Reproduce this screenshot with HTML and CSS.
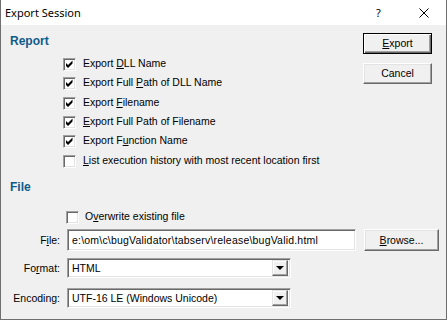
FILE: index.html
```html
<!DOCTYPE html>
<html lang="en">

<head>
    <meta charset="UTF-8">
    <title>Export Session</title>
    <link rel="stylesheet" href="styles.css">
</head>

<body>
    <div class="dialog">
        <div class="titlebar">
            <span class="title">Export Session</span>
            <span class="help">?</span>
            <span class="close">
                <svg width="10" height="10" viewBox="0 0 10 10">
                    <path d="M0.5 0.5 L9.5 9.5 M9.5 0.5 L0.5 9.5" stroke="#000" stroke-width="1" fill="none" />
                </svg>
            </span>
        </div>

        <div class="content">
            <div class="top">
                <div class="report">
                    <h2 class="section first">Report</h2>
                    <div class="checks">
                        <div class="check-row"><span class="box checked"></span><span class="label">Export <u>D</u>LL Name</span></div>
                        <div class="check-row"><span class="box checked"></span><span class="label">Export Full <u>P</u>ath of DLL Name</span></div>
                        <div class="check-row"><span class="box checked"></span><span class="label">Export <u>F</u>ilename</span></div>
                        <div class="check-row"><span class="box checked"></span><span class="label"><u>E</u>xport Full Path of Filename</span></div>
                        <div class="check-row"><span class="box checked"></span><span class="label">Export F<u>u</u>nction Name</span></div>
                        <div class="check-row"><span class="box"></span><span class="label"><u>L</u>ist execution history with most recent location first</span></div>
                    </div>
                </div>
                <div class="actions">
                    <div class="btn default"><u>E</u>xport</div>
                    <div class="btn">Cancel</div>
                </div>
            </div>

            <h2 class="section">File</h2>
            <div class="check-row overwrite"><span class="box"></span><span class="label">O<u>v</u>erwrite existing file</span></div>

            <div class="field file-row">
                <span class="field-label">F<u>i</u>le:</span>
                <div class="sunken text-input">e:\om\c\bugValidator\tabserv\release\bugValid.html</div>
                <div class="btn browse"><u>B</u>rowse...</div>
            </div>
            <div class="field combo-row">
                <span class="field-label">Fo<u>r</u>mat:</span>
                <div class="sunken combo">
                    <span class="combo-text">HTML</span>
                    <span class="arrow"></span>
                </div>
            </div>
            <div class="field combo-row last">
                <span class="field-label">Encoding:</span>
                <div class="sunken combo">
                    <span class="combo-text">UTF-16 LE (Windows Unicode)</span>
                    <span class="arrow"></span>
                </div>
            </div>
        </div>
    </div>
</body>

</html>
```

FILE: styles.css
```css
html,
body {
    margin: 0;
    padding: 0;
    background-color: #ffffff;
}

body {
    font-family: "Liberation Sans", Arial, sans-serif;
    font-size: 10.5px;
    color: #000;
}

.dialog {
    width: 445px;
    height: 319px;
    border: 1px solid #6f6f6f;
    border-top: none;
    background-color: #f0f0f0;
}

/* title bar */
.titlebar {
    height: 25px;
    background-color: #fff;
    display: flex;
    align-items: center;
    padding: 0 17px 0 4px;
    font-family: "Noto Sans", sans-serif;
    font-size: 11px;
    line-height: 25px;
}

.title {
    flex: 1;
}

.help {
    width: 6px;
}

.close {
    margin-left: 37px;
    display: flex;
}

/* body */
.content {
    padding: 8px 0 0 9px;
}

.top {
    display: flex;
}

.report {
    flex: 1;
}

.section {
    margin: 6px 0 0 0;
    font-size: 12px;
    line-height: 14px;
    font-weight: bold;
    color: #0e5a8b;
}

.section.first {
    margin-top: 1px;
}

.checks {
    margin: 10px 0 0 53px;
}

.check-row {
    display: flex;
    align-items: flex-start;
    height: 19.35px;
}

.box {
    width: 11px;
    height: 11px;
    border: 1px solid;
    border-color: #a0a0a0 #fff #fff #a0a0a0;
    box-shadow: inset 1px 1px 0 #696969, inset -1px -1px 0 #e3e3e3;
    background-color: #fff;
    flex-shrink: 0;
}

.box.checked {
    background-image: url("data:image/svg+xml;utf8,<svg xmlns='http://www.w3.org/2000/svg' width='11' height='11' viewBox='0 0 11 11'><path d='M2 4 L4 6 L8.5 1.5 L8.5 4.5 L4 9 L2 7 Z' fill='black'/></svg>");
}

.check-row .label {
    margin-left: 7px;
    line-height: 11px;
    white-space: nowrap;
}

.actions {
    width: 69px;
    margin-right: 14px;
    display: flex;
    flex-direction: column;
    gap: 9px;
}

.btn {
    height: 19px;
    border: 1px solid;
    border-color: #fff #696969 #696969 #fff;
    box-shadow: inset -1px -1px 0 #a0a0a0, inset 1px 1px 0 #e3e3e3;
    background-color: #f0f0f0;
    display: flex;
    align-items: center;
    justify-content: center;
    line-height: 13px;
}

.btn.default {
    border-color: #000;
    box-shadow: inset 1px 1px 0 #fff, inset -1px -1px 0 #696969, inset -2px -2px 0 #a0a0a0;
}

/* file section */
.overwrite {
    margin: 17px 0 0 56px;
    height: 13px;
}

.overwrite .label {
    margin-left: 6px;
}

.field {
    display: flex;
    align-items: center;
    line-height: 13px;
}

.field-label {
    width: 50px;
    text-align: right;
    margin-right: 7px;
}

.sunken {
    border: 1px solid;
    border-color: #a0a0a0 #fff #fff #a0a0a0;
    box-shadow: inset 1px 1px 0 #696969, inset -1px -1px 0 #e3e3e3;
    background-color: #fff;
}

.file-row {
    margin-top: 5px;
    height: 22px;
}

.text-input {
    width: 283px;
    height: 20px;
    padding-left: 4px;
    display: flex;
    align-items: center;
    white-space: nowrap;
    letter-spacing: 0.2px;
}

.browse {
    width: 73px;
    height: 20px;
    margin-left: 8px;
}

.combo-row {
    margin-top: 7px;
    height: 20px;
}

.combo-row.last {
    margin-top: 10px;
}

.combo {
    width: 222px;
    height: 18px;
    display: flex;
    align-items: center;
    justify-content: space-between;
}

.combo-text {
    padding-left: 4px;
}

.arrow {
    width: 14px;
    height: 14px;
    margin-right: 2px;
    border: 1px solid;
    border-color: #e3e3e3 #696969 #696969 #e3e3e3;
    box-shadow: inset -1px -1px 0 #a0a0a0, inset 1px 1px 0 #fff;
    background-color: #f0f0f0;
    position: relative;
}

.arrow::after {
    content: "";
    position: absolute;
    left: 3px;
    top: 5px;
    border-left: 4px solid transparent;
    border-right: 4px solid transparent;
    border-top: 4px solid #000;
}
```
